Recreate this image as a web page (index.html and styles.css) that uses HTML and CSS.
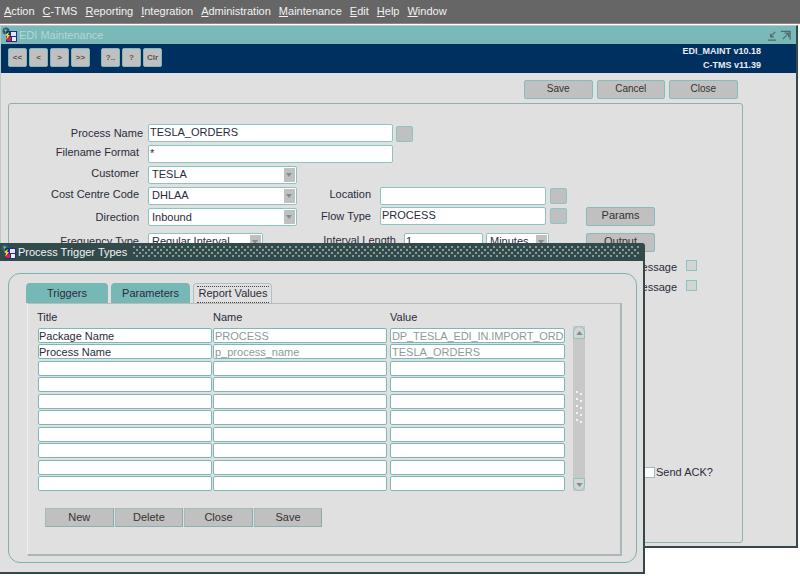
FILE: index.html
```html
<!DOCTYPE html>
<html lang="en">
<head>
<meta charset="utf-8">
<title>EDI Maintenance</title>
<link rel="stylesheet" href="styles.css">
</head>
<body>
<nav class="menubar">
  <span class="menu"><u>A</u>ction</span>
  <span class="menu"><u>C</u>-TMS</span>
  <span class="menu"><u>R</u>eporting</span>
  <span class="menu"><u>I</u>ntegration</span>
  <span class="menu"><u>A</u>dministration</span>
  <span class="menu"><u>M</u>aintenance</span>
  <span class="menu"><u>E</u>dit</span>
  <span class="menu"><u>H</u>elp</span>
  <span class="menu"><u>W</u>indow</span>
</nav>

<section class="window main-window">
  <header class="titlebar teal">
    <svg class="appicon" viewBox="0 0 16 16"><circle cx="4" cy="4" r="3.5" fill="#2f5f6f"/><path d="M2 2l3 1-1 3z" fill="#7fc08f"/><rect x="4" y="4" width="11" height="11" fill="#1c2f8c"/><rect x="9" y="5" width="5" height="4" fill="#e8e8f4"/><rect x="5" y="10" width="4" height="4" fill="#d8203c"/><rect x="10" y="10" width="4" height="4" fill="#f0e8f0"/><path d="M3 8l4-3-1 3h2l-4 5 1-4z" fill="#f4e020"/></svg>
    <span class="title-text dim">EDI Maintenance</span>
    <span class="winctl">
      <svg viewBox="0 0 12 12"><path d="M1 11h9M9 2L4 7M4 4v3.5h3.5" fill="none" stroke="#4f6b6b" stroke-width="1.3"/></svg>
      <svg viewBox="0 0 12 12"><path d="M1 1.5h10v9M3 10l6-6M5 3.5h4.5V8" fill="none" stroke="#4f6b6b" stroke-width="1.3"/></svg>
    </span>
  </header>
  <div class="toolbar">
    <div class="tools">
      <span class="tool">&lt;&lt;</span><span class="tool">&lt;</span><span class="tool">&gt;</span><span class="tool">&gt;&gt;</span>
      <span class="tool tool-gap">?..</span><span class="tool">?</span><span class="tool">Clr</span>
    </div>
    <div class="version"><div>EDI_MAINT v10.18</div><div>C-TMS v11.39</div></div>
  </div>
  <div class="main-body">
    <div class="actions">
      <span class="btn btn-main">Save</span><span class="btn btn-main">Cancel</span><span class="btn btn-main">Close</span>
    </div>
    <div class="panel">
      <div class="row">
        <label class="lbl lbl-first">Process Name</label>
        <span class="input plain w-long">TESLA_ORDERS</span>
        <span class="mini"></span>
      </div>
      <div class="row">
        <label class="lbl">Filename Format</label>
        <span class="input plain w-long">*</span>
      </div>
      <div class="row">
        <label class="lbl">Customer</label>
        <span class="input select w-select">TESLA<i class="drop"></i></span>
      </div>
      <div class="row">
        <label class="lbl">Cost Centre Code</label>
        <span class="input select w-select">DHLAA<i class="drop"></i></span>
        <label class="lbl2">Location</label>
        <span class="input plain w-right"></span>
        <span class="mini mini-right"></span>
      </div>
      <div class="row">
        <label class="lbl lbl-low">Direction</label>
        <span class="input select w-select low-text">Inbound<i class="drop"></i></span>
        <label class="lbl2 lbl-flow">Flow Type</label>
        <span class="input plain w-right up">PROCESS</span>
        <span class="mini mini-right up"></span>
        <span class="btn btn-side up">Params</span>
      </div>
      <div class="row row-freq">
        <label class="lbl lbl-freq">Frequency Type</label>
        <span class="input select w-freq">Regular Interval<i class="drop"></i></span>
        <label class="lbl3">Interval Length</label>
        <span class="input plain w-int">1</span>
        <span class="input select w-unit">Minutes<i class="drop"></i></span>
        <span class="btn btn-side btn-output">Output</span>
      </div>
      <div class="row row-msg">
        <label class="msg">Message</label><span class="check"></span>
      </div>
      <div class="row row-msg2">
        <label class="msg">Message</label><span class="check"></span>
      </div>
      <div class="row row-ack">
        <span class="ack-box"></span><label class="ack">Send ACK?</label>
      </div>
    </div>
  </div>
</section>

<section class="window popup">
  <header class="titlebar dark">
    <svg class="appicon" viewBox="0 0 16 16"><circle cx="4" cy="4" r="3.5" fill="#2f5f6f"/><path d="M2 2l3 1-1 3z" fill="#7fc08f"/><rect x="4" y="4" width="11" height="11" fill="#1c2f8c"/><rect x="9" y="5" width="5" height="4" fill="#e8e8f4"/><rect x="5" y="10" width="4" height="4" fill="#d8203c"/><rect x="10" y="10" width="4" height="4" fill="#f0e8f0"/><path d="M3 8l4-3-1 3h2l-4 5 1-4z" fill="#f4e020"/></svg>
    <span class="title-text">Process Trigger Types</span>
    <span class="dots"></span>
  </header>
  <div class="popup-body">
    <div class="frame">
      <div class="tabs">
        <span class="tab tab-1">Triggers</span>
        <span class="tab tab-2">Parameters</span>
        <span class="tab tab-active"><span class="focus">Report Values</span></span>
      </div>
      <div class="tabpanel">
        <div class="heads"><span class="head h1">Title</span><span class="head h2">Name</span><span class="head h3">Value</span></div>
        <div class="table-wrap">
          <div class="grid">
            <span class="cell">Package Name</span><span class="cell ro">PROCESS</span><span class="cell ro tight">DP_TESLA_EDI_IN.IMPORT_ORDI</span>
            <span class="cell">Process Name</span><span class="cell ro">p_process_name</span><span class="cell ro">TESLA_ORDERS</span>
            <span class="cell"></span><span class="cell"></span><span class="cell"></span>
            <span class="cell"></span><span class="cell"></span><span class="cell"></span>
            <span class="cell"></span><span class="cell"></span><span class="cell"></span>
            <span class="cell"></span><span class="cell"></span><span class="cell"></span>
            <span class="cell"></span><span class="cell"></span><span class="cell"></span>
            <span class="cell"></span><span class="cell"></span><span class="cell"></span>
            <span class="cell"></span><span class="cell"></span><span class="cell"></span>
            <span class="cell"></span><span class="cell"></span><span class="cell"></span>
          </div>
          <div class="scrollbar">
            <span class="sb-btn sb-up"><svg viewBox="0 0 8 5"><path d="M0 5L4 0l4 5z" fill="#7d8f8f"/></svg></span>
            <span class="grip"></span>
            <span class="sb-btn sb-down"><svg viewBox="0 0 8 5"><path d="M0 0l4 5 4-5z" fill="#7d8f8f"/></svg></span>
          </div>
        </div>
        <div class="popup-actions">
          <span class="btn btn-pop">New</span><span class="btn btn-pop">Delete</span><span class="btn btn-pop">Close</span><span class="btn btn-pop">Save</span>
        </div>
      </div>
    </div>
  </div>
</section>
</body>
</html>
```

FILE: styles.css
```css
* { box-sizing: border-box; }
html, body { margin: 0; padding: 0; }
body {
  width: 800px; height: 576px; overflow: hidden; position: relative;
  background: #fff; color: #2b2b3a;
  font: 11px/14px "Liberation Sans", Arial, sans-serif;
}
.menubar {
  height: 24px; background: #666; color: #f2f2f2; display: flex;
  align-items: center; padding: 0 0 1px 4px; border-bottom: 1px solid #8a8a8a;
}
.menu { margin-right: 8px; }
.menu u { text-underline-offset: 1px; }

.window { position: absolute; background: #e0e0e0; }
.main-window {
  left: 0; top: 25px; width: 798px; height: 523px;
  border: 1px solid #b9c9c9; border-right: 2px solid #35494a; border-bottom: 2px solid #35494a;
  display: flex; flex-direction: column;
}
.titlebar { height: 18px; display: flex; align-items: center; flex: none; }
.teal { background: #7ab9b8; }
.dark { background: #324a4a; }
.appicon { width: 16px; height: 16px; flex: none; margin-left: 1px; }
.title-text { color: #f0f4f4; margin-left: 1px; white-space: nowrap; }
.title-text.dim { color: #b3d8d6; }
.winctl { margin-left: auto; display: flex; gap: 2px; margin-right: 5px; }
.winctl svg { width: 11px; height: 11px; }

.toolbar {
  height: 29px; background: #003060; flex: none; display: flex;
  justify-content: space-between; padding: 4px 0 0 7px;
}
.tools { display: flex; gap: 2px; }
.tool {
  width: 19px; height: 19px; background: #c0c0c0; border: 1px solid #7fb8b8; border-radius: 2px;
  font-size: 8px; line-height: 17px; text-align: center; color: #555; font-weight: bold;
}
.tool-gap { margin-left: 9px; }
.version {
  color: #e8eef4; font-size: 9px; font-weight: bold; line-height: 14px; text-align: right;
  padding: 0 35px 0 0; margin-top: -4px;
}

.main-body { flex: 1; display: flex; flex-direction: column; min-height: 0; padding: 7px 0 3px 7px; }
.actions { display: flex; gap: 4px; padding-left: 516px; height: 23px; flex: none; }
.btn {
  background: #c0c0c0; border: 1px solid #87bcbc; border-radius: 2px; color: #333;
  text-align: center; display: block; flex: none;
}
.btn-main { width: 68.5px; height: 19px; font-size: 10px; line-height: 16px; }

.panel {
  flex: 1; width: 735px; border: 1px solid #8fb0b0; border-radius: 3px; min-height: 0; padding-top: 20px;
}
.row { display: flex; height: 18px; margin-bottom: 3px; align-items: flex-start; }
.lbl { width: 139px; padding-right: 9px; text-align: right; flex: none; line-height: 15px; white-space: nowrap; }
.lbl-first { padding-right: 5px; line-height: 18px; }
.lbl-low { line-height: 18px; }
.lbl-freq { line-height: 17px; }
.input {
  background: #fff; border: 1px solid #8cc4c4; border-radius: 2px; height: 18px;
  padding-left: 3px; line-height: 15px; display: block; flex: none; position: relative; white-space: nowrap;
}
.low-text { line-height: 16px; }
.plain { padding-left: 1px; }
.w-long { width: 244.5px; }
.w-select { width: 149px; }
.w-right { width: 166px; }
.w-freq { width: 115px; }
.w-int { width: 79px; }
.w-unit { width: 63px; margin-left: 3px; }
.drop {
  position: absolute; right: 1px; top: 1px; width: 11px; height: 14px; background: #c0c0c0;
}
.drop::after {
  content: ""; position: absolute; left: 2px; top: 5px;
  border: 3.5px solid transparent; border-top: 4px solid #7d8f8f; border-bottom: 0;
}
.mini {
  width: 17px; height: 16px; background: #c0c0c0; border: 1px solid #8cc4c4; border-radius: 2px;
  margin: 2px 0 0 3.5px; flex: none; display: block;
}
.mini-right { margin-top: 1px; margin-left: 4px; }
.lbl2 { width: 83px; padding-right: 9px; text-align: right; flex: none; line-height: 15px; white-space: nowrap; }
.lbl-flow { line-height: 17px; }
.up { margin-top: -1px; }
.mini-right.up { margin-top: 0; }
.btn-side { width: 69px; height: 19px; line-height: 15px; margin-left: 19px; }
.row-freq { margin-top: 7px; }
.lbl3 { width: 141px; padding-right: 8px; text-align: right; flex: none; line-height: 15px; white-space: nowrap; }
.btn-output { margin-left: 37px; }
.row-msg { margin-top: 8px; }
.msg { width: 668px; text-align: right; flex: none; line-height: 16px; white-space: nowrap; }
.check {
  width: 11px; height: 11px; margin: 1px 0 0 9px; background: #d4d4d4; border: 1px solid #8cc4c4; display: block; flex: none;
}
.row-msg2 { margin-top: -1px; }
.row-ack { margin-top: 167px; padding-left: 635px; }
.ack-box { width: 11px; height: 11px; background: #fff; border: 1px solid #a8b8b8; margin-top: 3px; flex: none; display: block; }
.ack { margin-left: 1px; line-height: 16px; white-space: nowrap; }

.popup {
  left: 0; top: 243px; width: 645px; height: 331px; padding: 0 0 0 1px;
  border-right: 2px solid #35494a; border-bottom: 2px solid #35494a;
  border-top-right-radius: 3px; display: flex; flex-direction: column;
}
.popup .titlebar { margin-left: -1px; }
.dots {
  flex: 1; height: 12px; margin: 0 3px 0 6px;
  background-color: #324a4a;
  background-image:
    radial-gradient(circle at 1px 1px, #84a0a0 0.7px, transparent 1px),
    radial-gradient(circle at 4px 4px, #84a0a0 0.7px, transparent 1px);
  background-size: 6px 6px;
}
.popup-body { flex: 1; padding: 12px 6px 9px 7px; min-height: 0; display: flex; }
.frame {
  flex: 1; border: 1px solid #7fb0b0; border-radius: 12px; padding: 9px 14px 6px 17px;
  display: flex; flex-direction: column;
}
.tabs { display: flex; height: 20px; flex: none; gap: 3px; }
.tab {
  background: #76b8b6; border-radius: 4px 4px 0 0; text-align: center; line-height: 21px; display: block; flex: none;
}
.tab-1 { width: 82px; }
.tab-2 { width: 79px; }
.tab-active {
  width: 79px; background: #e0e0e0; border: 1px solid #a9c4c4; border-bottom: 0; padding: 2px 2px 0 3px;
}
.focus { display: block; border-top: 1px dotted #444; border-bottom: 1px dotted #444; line-height: 13px; height: 17px; white-space: nowrap; }
.tabpanel {
  flex: 1; border: 1px solid #eee; border-top: 1px solid #bbb; border-right: 2px solid #a8b8b8; border-bottom: 2px solid #a8b8b8;
  width: 595px; margin-left: 1px; padding: 1px 0 0 10px; display: flex; flex-direction: column;
}
.heads { display: flex; height: 23px; flex: none; line-height: 24px; margin-left: -1px; }
.head { display: block; }
.h1 { width: 176px; }
.h2 { width: 177px; }
.table-wrap { display: flex; gap: 8px; height: 163px; flex: none; }
.grid {
  display: grid; grid-template-columns: 175px 177px 175px; grid-auto-rows: 15px;
  row-gap: 1.45px; width: 527px;
}
.cell {
  background: #fff; border: 1px solid #7cb8b8; border-top-width: 1.5px; border-radius: 2px; padding-left: 0;
  line-height: 14px; overflow: hidden; white-space: nowrap; display: block; width: 174px;
}
.cell:nth-child(3n) { width: 175px; }
.ro { color: #8d9b9b; padding-left: 1px; }
.tight { letter-spacing: -0.1px; }
.scrollbar {
  width: 12px; height: 165px; margin-top: -2px; background: #c8c8c8; display: flex; flex-direction: column;
  justify-content: space-between; align-items: center; position: relative; flex: none;
}
.sb-btn { width: 12px; height: 13px; background: #d4d4d4; border: 1px solid #8cc4c4; display: flex; align-items: center; justify-content: center; }
.sb-btn svg { width: 7px; height: 4px; }
.sb-up { border-radius: 6px 6px 0 0; }
.sb-down { border-radius: 0 0 6px 6px; }
.grip {
  width: 7px; height: 35px;
  background-image: radial-gradient(circle at 1px 1px, #f4f4f4 0.8px, transparent 1px),
    radial-gradient(circle at 5px 3px, #f4f4f4 0.8px, transparent 1px);
  background-size: 7px 7px;
}
.popup-actions { display: flex; gap: 1px; margin: 17px 0 0 7px; }
.btn-pop { width: 68.6px; height: 19px; line-height: 17px; border: 1px solid #a0bcbc; border-right-color: #8aa; border-bottom-color: #8ab0b0; border-radius: 0; }
```
